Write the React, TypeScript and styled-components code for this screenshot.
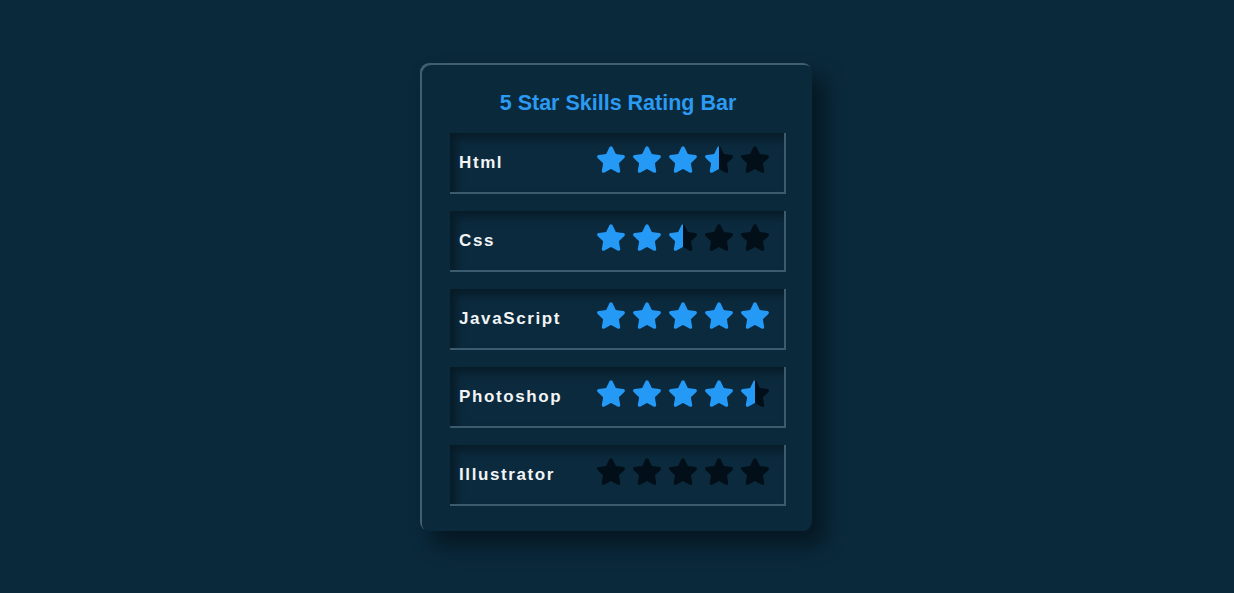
import React from "react";
import styled, { createGlobalStyle } from "styled-components";
import { FaStar } from "react-icons/fa";

const Global = createGlobalStyle`
  html, body { margin: 0; padding: 0; }
  body {
    background: #0a293b;
    font-family: "Liberation Sans", Arial, sans-serif;
  }
`;

const Page = styled.div`
  min-height: 100vh;
  display: flex;
  align-items: center;
  justify-content: center;
`;

const Card = styled.div`
  box-sizing: border-box;
  width: 392px;
  height: 468px;
  margin-left: -2px;
  padding: 26px 26px 0 30px;
  background: #0a293b;
  border-radius: 9px;
  box-shadow: inset 2px 2px 0 #3f6074, 12px 14px 22px rgba(0, 0, 0, 0.45);
  display: flex;
  flex-direction: column;
`;

const Title = styled.h2`
  margin: 0 0 16px 0;
  text-align: center;
  font-size: 21.5px;
  line-height: 28px;
  font-weight: 700;
  color: #2a9af2;
`;

const List = styled.div`
  display: flex;
  flex-direction: column;
  gap: 17px;
`;

const Row = styled.div`
  box-sizing: border-box;
  width: 336px;
  height: 61px;
  display: flex;
  align-items: center;
  justify-content: space-between;
  padding: 0 14px 0 9px;
  background: #0b2a3d;
  border-right: 2px solid #3b5b6f;
  border-bottom: 2px solid #3b5b6f;
  box-shadow: inset 6px 6px 8px rgba(0, 0, 0, 0.35);
`;

const Label = styled.span`
  color: #f2f4f6;
  font-size: 17px;
  font-weight: 700;
  letter-spacing: 1.6px;
  margin-top: 2px;
`;

const Stars = styled.div`
  display: flex;
  gap: 6px;
  margin-top: -5px;
`;

const StarBox = styled.span`
  position: relative;
  width: 30px;
  height: 27px;
  display: block;
  color: #020f18;
  svg { display: block; width: 30px; height: 27px; }
`;

const Fill = styled.span<{ $w: number }>`
  position: absolute;
  left: 0;
  top: 0;
  height: 27px;
  width: ${(p) => p.$w}%;
  overflow: hidden;
  color: #2499f6;
  svg { width: 30px; height: 27px; }
`;

const skills = [
  { name: "Html", rating: 3.5 },
  { name: "Css", rating: 2.5 },
  { name: "JavaScript", rating: 5 },
  { name: "Photoshop", rating: 4.5 },
  { name: "Illustrator", rating: 0 },
];

function Star({ fill }: { fill: number }) {
  return (
    <StarBox>
      <FaStar />
      {fill > 0 && (
        <Fill $w={fill * 100}>
          <FaStar />
        </Fill>
      )}
    </StarBox>
  );
}

export default function App() {
  return (
    <>
      <Global />
      <Page>
        <Card>
          <Title>5 Star Skills Rating Bar</Title>
          <List>
            {skills.map((s) => (
              <Row key={s.name}>
                <Label>{s.name}</Label>
                <Stars>
                  {[0, 1, 2, 3, 4].map((i) => (
                    <Star key={i} fill={Math.max(0, Math.min(1, s.rating - i))} />
                  ))}
                </Stars>
              </Row>
            ))}
          </List>
        </Card>
      </Page>
    </>
  );
}
